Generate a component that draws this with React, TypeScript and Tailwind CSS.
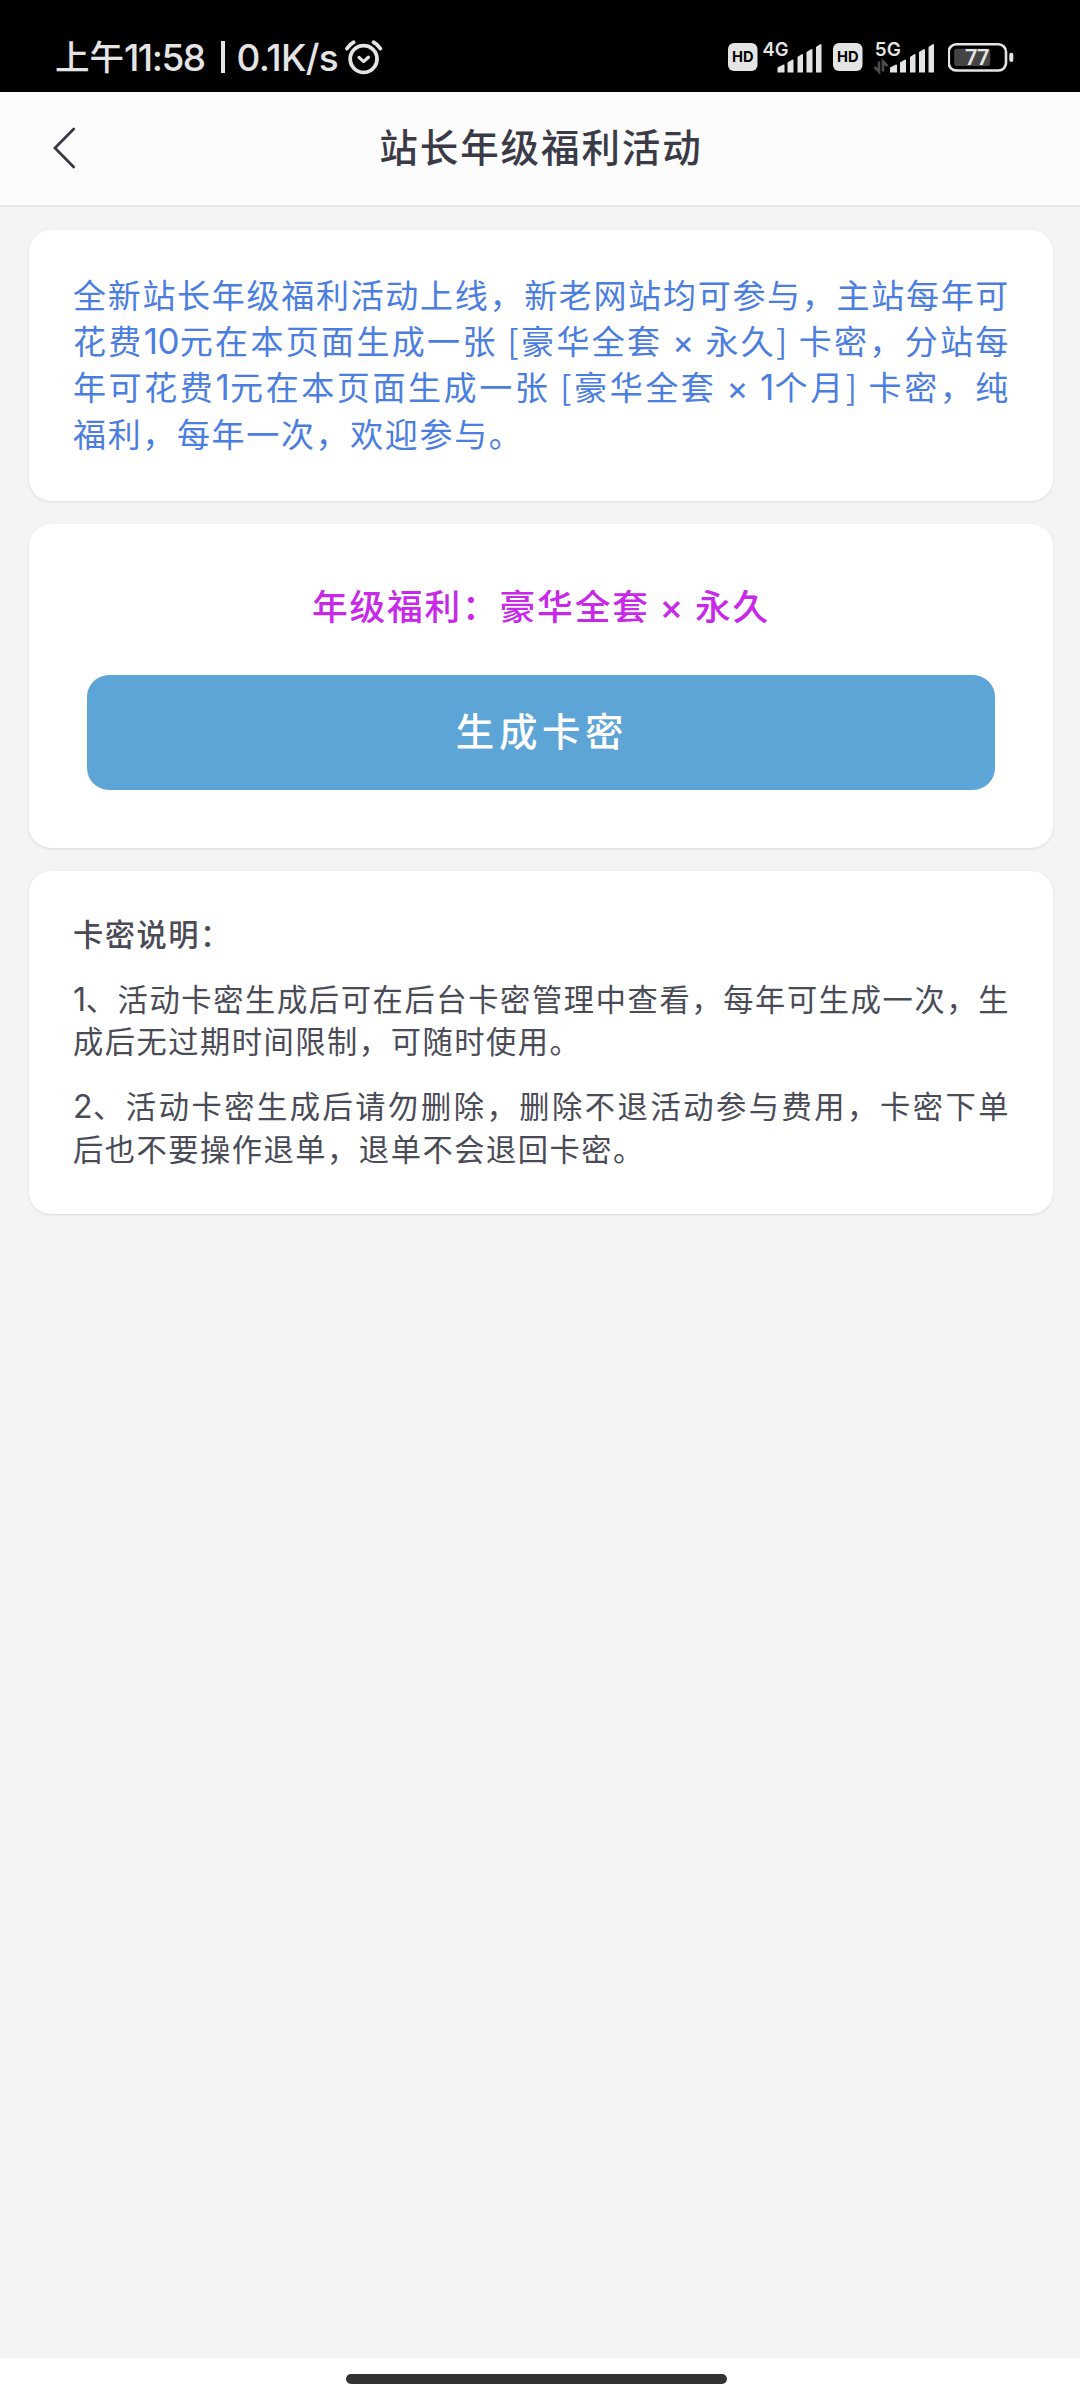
import type { ReactNode } from 'react'
import clsx from 'clsx'

// Heights of the five signal bars, shortest first
const signalBars = [
  { x: 0, w: 7, h: 8 },
  { x: 10, w: 6, h: 13 },
  { x: 20, w: 5.5, h: 18.5 },
  { x: 29, w: 6, h: 23.5 },
  { x: 38.5, w: 5.5, h: 28.5 },
]

const introLines = [
  <>全新站长年级福利活动上线，新老网站均可参与，主站每年可</>,
  <>
    花费<Num>10</Num>元在本页面生成一张 [豪华全套 <Times /> 永久] 卡密，分站每
  </>,
  <>
    年可花费<Num>1</Num>元在本页面生成一张 [豪华全套 <Times /> <Num>1</Num>个月] 卡密，纯
  </>,
  <>福利，每年一次，欢迎参与。</>,
]

const notes = [
  {
    index: '1',
    lines: ['、活动卡密生成后可在后台卡密管理中查看，每年可生成一次，生', '成后无过期时间限制，可随时使用。'],
  },
  {
    index: '2',
    lines: ['、活动卡密生成后请勿删除，删除不退活动参与费用，卡密下单', '后也不要操作退单，退单不会退回卡密。'],
  },
]

function Num({ children }: { children: ReactNode }) {
  return <span className="font-[Inter] text-[1.06em] leading-none tracking-[-0.5px]">{children}</span>
}

function Times() {
  return <span className="font-[Inter] leading-none">×</span>
}

// One line of a paragraph, stretched to both edges unless it is the last one
function Line({ last, children }: { last: boolean; children: ReactNode }) {
  return (
    <span className={clsx('block whitespace-nowrap', !last && '[text-align-last:justify]')}>
      {children}
    </span>
  )
}

function HdBadge() {
  return (
    <svg width="30" height="28" viewBox="0 0 30 28">
      <rect width="29.5" height="28" rx="6" fill="#e4e4e4" />
      <text x="4" y="19.4" textLength="21.5" lengthAdjust="spacingAndGlyphs" className="font-[Inter] text-[15px] font-bold" fill="#000">
        HD
      </text>
    </svg>
  )
}

function Signal({ label, data }: { label: string; data?: boolean }) {
  return (
    <svg width="62" height="34" viewBox="0 0 62 34" className="overflow-visible">
      <text x={data ? 0.8 : -1.5} y="17" className="font-[Inter] text-[19px] font-semibold" fill="#e4e4e4" textLength="26" lengthAdjust="spacingAndGlyphs">
        {label}
      </text>
      {data && (
        <path d="M5 22.5V32.5L0.5 28M9 32.5V22.5L13.5 27" fill="none" stroke="#4d4d4d" strokeWidth="2.6" />
      )}
      <g transform={data ? 'translate(16 0)' : 'translate(13.5 0)'} fill="#e4e4e4">
        {signalBars.map((b) => (
          <path
            key={b.x}
            d={`M${b.x} ${33.5 - b.h + 3}L${b.x + b.w - 1} ${33.5 - b.h}L${b.x + b.w} ${34 - b.h}V33.5H${b.x}Z`}
          />
        ))}
      </g>
    </svg>
  )
}

function Battery() {
  return (
    <svg width="66" height="29" viewBox="0 0 66 29">
      <rect x="0.8" y="1.3" width="57.2" height="26.2" rx="7.5" fill="none" stroke="#e4e4e4" strokeWidth="2.6" />
      <rect x="6.2" y="5.7" width="36" height="17.3" rx="2.5" fill="#444" />
      <rect x="61.3" y="9.7" width="4" height="9.3" rx="2" fill="#e4e4e4" />
      <text x="17" y="22.4" textLength="24.5" className="font-[Roboto] text-[22px] font-semibold" fill="#e4e4e4">
        77
      </text>
    </svg>
  )
}

function AlarmIcon() {
  return (
    <svg width="38" height="35" viewBox="0 0 38 35" fill="none" stroke="#e4e4e4" strokeWidth="3.8" strokeLinecap="round">
      <circle cx="18.6" cy="19" r="13.4" />
      <path d="M2 8.6Q4.7 4.3 8.6 2.3M35.3 8.6Q32.6 4.3 28.6 2.3" />
      <path d="M14 17.4L18.6 21.6L23.4 17.2" strokeWidth="3.2" strokeLinejoin="round" />
    </svg>
  )
}

function StatusBar() {
  return (
    <div className="flex h-[92px] items-start justify-between bg-black pl-[55px] pr-[66px] text-[#e4e4e4]">
      <div className="flex pt-[40px]">
        <div className="flex h-[35px] items-center whitespace-nowrap font-medium">
          <span className="-mt-[4px] w-[69px] text-[34.5px]">上午</span>
          <span className="w-[97px] font-[Inter] text-[37px] tracking-[-1.5px]">11:58</span>
          <span className="-mt-[2px] h-[32px] w-[4px] bg-[#e4e4e4]" />
          <span className="ml-[11.5px] w-[108.5px] font-[Inter] text-[37px] tracking-[-0.6px]">0.1K/s</span>
        </div>
        <AlarmIcon />
      </div>
      <div className="flex pt-[43px]">
        <HdBadge />
        <div className="-mt-[4px] ml-[5.5px] w-[69.5px]">
          <Signal label="4G" />
        </div>
        <HdBadge />
        <div className="-mt-[4px] ml-[11px] w-[74px]">
          <Signal label="5G" data />
        </div>
        <Battery />
      </div>
    </div>
  )
}

function Card({ className, children }: { className?: string; children: ReactNode }) {
  return (
    <section className={clsx('rounded-[22px] bg-white shadow-[0_1px_3px_rgba(0,0,0,0.1)]', className)}>
      {children}
    </section>
  )
}

export default function App() {
  return (
    <div className="flex h-[2400px] w-[1080px] flex-col overflow-hidden bg-[#f4f4f4] font-['Noto_Sans_CJK_SC',sans-serif]">
      <StatusBar />
      <header className="flex h-[115px] items-center border-b-2 border-[#e9e9eb] bg-[#fcfcfc] pb-[2px] text-[#3a3b47]">
        <button className="ml-[52px] w-[24px]" aria-label="返回">
          <svg width="24" height="42" viewBox="0 0 24 42" fill="none" stroke="currentColor" strokeWidth="2.8" strokeLinecap="round">
            <path d="M21.7 2L3 21L21.7 40" />
          </svg>
        </button>
        <h1 className="mr-[74px] flex-1 pb-[3px] text-center text-[38.5px] font-medium tracking-[0.05em]">
          站长年级福利活动
        </h1>
      </header>

      <main className="flex flex-1 flex-col gap-[23px] pl-[29px] pr-[27px] pt-[23px]">
        <Card className="h-[271px] pl-[44px] pr-[43px] pt-[41px]">
          <p className="text-[33px] leading-[46.2px] tracking-[0.05em] text-[#4b7edf]">
            {introLines.map((line, i) => (
              <Line key={i} last={i === introLines.length - 1}>
                {line}
              </Line>
            ))}
          </p>
        </Card>

        <Card className="flex h-[324px] flex-col px-[58px] pt-[56px]">
          <h2 className="text-center text-[35.75px] font-medium leading-[50px] tracking-[0.05em] text-[#c829e8]">
            年级福利：豪华全套 <Times /> 永久
          </h2>
          <button className="mt-[45px] h-[115px] rounded-[22px] bg-[#5da4d7] pb-[5px] pl-[2px] text-[38.5px] font-medium tracking-[4.6px] text-white">
            生成卡密
          </button>
        </Card>

        <Card className="flex h-[343px] flex-col gap-[22.6px] pl-[44px] pr-[43px] pt-[41px] text-[30.25px] leading-[42.35px] tracking-[0.05em] text-[#4a4b57]">
          <h3 className="font-medium">卡密说明：</h3>
          {notes.map(({ index, lines }) => (
            <p key={index}>
              {lines.map((line, i) => (
                <Line key={line} last={i === lines.length - 1}>
                  {i === 0 && <Num>{index}</Num>}
                  {line}
                </Line>
              ))}
            </p>
          ))}
        </Card>
      </main>

      <footer className="flex h-[42px] justify-center bg-white pr-[7px] pt-[16px]">
        <div className="h-[10px] w-[381px] rounded-full bg-[#333]" />
      </footer>
    </div>
  )
}
